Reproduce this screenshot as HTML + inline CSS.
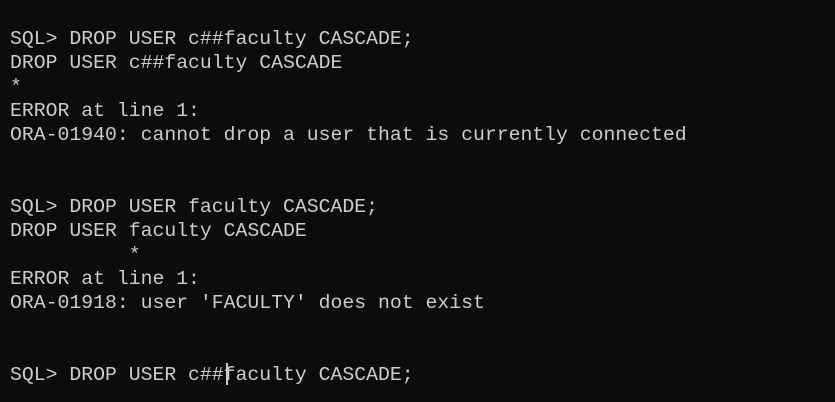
<!DOCTYPE html>
<html><head><meta charset="utf-8"><style>
html,body{margin:0;padding:0;background:#0c0c0c;width:835px;height:402px;overflow:hidden}
pre{margin:0;position:absolute;left:10px;top:27px;font-family:"Liberation Mono",monospace;font-size:19.8px;line-height:24px;color:#cccccc;white-space:pre}
.cur{position:absolute;left:226px;top:363px;width:2px;height:22px;background:#cccccc}
</style></head><body>
<pre>SQL&gt; DROP USER c##faculty CASCADE;
DROP USER c##faculty CASCADE
*
ERROR at line 1:
ORA-01940: cannot drop a user that is currently connected


SQL&gt; DROP USER faculty CASCADE;
DROP USER faculty CASCADE
          *
ERROR at line 1:
ORA-01918: user 'FACULTY' does not exist


SQL&gt; DROP USER c##faculty CASCADE;</pre>
<div class="cur"></div>
</body></html>
